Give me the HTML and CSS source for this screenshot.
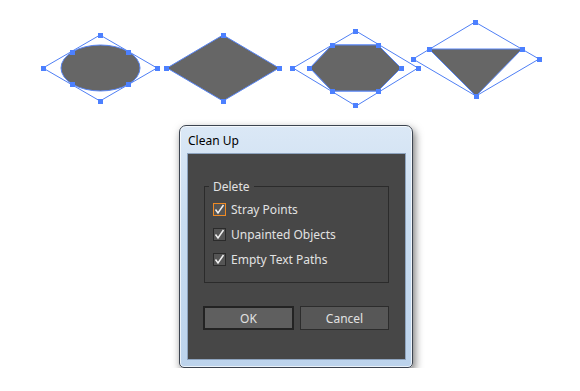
FILE: index.html
```html
<!DOCTYPE html>
<html lang="en">
<head>
    <meta charset="UTF-8">
    <title>Clean Up</title>
    <link rel="stylesheet" href="styles.css">
</head>
<body>

    <svg class="shapes" width="580" height="125" viewBox="0 0 580 125">
        <!-- ellipse -->
        <polygon class="frame" points="100,35 157,68 100,101 43,68"/>
        <ellipse class="fill" cx="100.5" cy="68" rx="39.5" ry="23"/>
        <!-- diamond -->
        <polygon class="fill" points="167,68 223,35 279,68 223,101"/>
        <!-- hexagon -->
        <polygon class="frame" points="356,31 418,68 356,106 293,68"/>
        <polygon class="frame" points="310,68 332,45 378,45 401,68 378,91 332,91"/>
        <polygon class="fill" points="310,68 332,45 378,45 401,68 378,91 332,91"/>
        <!-- triangle -->
        <polygon class="frame" points="475,22 539,59 476,96 413,59"/>
        <polygon class="fill" points="429,49 522,49 476,96"/>

        <g class="handles">
            <rect x="98" y="33" width="5" height="5"/>
            <rect x="41" y="66" width="5" height="5"/>
            <rect x="155" y="66" width="5" height="5"/>
            <rect x="98" y="99" width="5" height="5"/>
            <rect x="70" y="50" width="5" height="5"/>
            <rect x="126" y="50" width="5" height="5"/>
            <rect x="70" y="82" width="5" height="5"/>
            <rect x="126" y="82" width="5" height="5"/>

            <rect x="221" y="33" width="5" height="5"/>
            <rect x="164" y="66" width="5" height="5"/>
            <rect x="277" y="66" width="5" height="5"/>
            <rect x="221" y="99" width="5" height="5"/>

            <rect x="353" y="29" width="5" height="5"/>
            <rect x="290" y="66" width="5" height="5"/>
            <rect x="416" y="66" width="5" height="5"/>
            <rect x="353" y="103" width="5" height="5"/>
            <rect x="330" y="43" width="5" height="5"/>
            <rect x="376" y="43" width="5" height="5"/>
            <rect x="307" y="66" width="5" height="5"/>
            <rect x="399" y="66" width="5" height="5"/>
            <rect x="330" y="89" width="5" height="5"/>
            <rect x="376" y="89" width="5" height="5"/>

            <rect x="473" y="20" width="5" height="5"/>
            <rect x="411" y="57" width="5" height="5"/>
            <rect x="537" y="57" width="5" height="5"/>
            <rect x="474" y="94" width="5" height="5"/>
            <rect x="427" y="47" width="5" height="5"/>
            <rect x="520" y="47" width="5" height="5"/>
        </g>
    </svg>

    <div class="window">
        <div class="titlebar">Clean Up</div>
        <div class="panel">
            <fieldset class="group">
                <legend>Delete</legend>
                <label class="check focused">
                    <span class="box"><svg width="11" height="11" viewBox="0 0 11 11"><polyline points="1.5,5.5 4,9 9.5,1"/></svg></span>
                    Stray Points
                </label>
                <label class="check">
                    <span class="box"><svg width="11" height="11" viewBox="0 0 11 11"><polyline points="1.5,5.5 4,9 9.5,1"/></svg></span>
                    Unpainted Objects
                </label>
                <label class="check">
                    <span class="box"><svg width="11" height="11" viewBox="0 0 11 11"><polyline points="1.5,5.5 4,9 9.5,1"/></svg></span>
                    Empty Text Paths
                </label>
            </fieldset>
            <div class="buttons">
                <button class="btn btn-default">OK</button>
                <button class="btn">Cancel</button>
            </div>
        </div>
    </div>

</body>
</html>
```

FILE: styles.css
```css
body {
    margin: 0;
    background: #fff;
    font-family: 'Noto Sans', 'DejaVu Sans', sans-serif;
    font-size: 12px;
}

.shapes {
    display: block;
}

.shapes .frame {
    fill: none;
    stroke: #4f7ff5;
    stroke-width: 1;
}

.shapes .fill {
    fill: #666;
    stroke: #5683f2;
    stroke-width: 1;
}

.handles rect {
    fill: #4c80ff;
}

.window {
    margin-left: 179px;
    width: 234px;
    height: 243px;
    box-sizing: border-box;
    padding: 0 6px 7px 7px;
    border: 1px solid #3c4450;
    border-radius: 7px 7px 5px 5px;
    background: linear-gradient(180deg, #dbe8f6 0%, #c8dcf0 40%, #bcd3ec 100%);
    box-shadow: 2px 4px 8px rgba(0, 0, 0, 0.55), inset 0 0 0 1px rgba(255, 255, 255, 0.7);
    display: flex;
    flex-direction: column;
}

.titlebar {
    height: 27px;
    line-height: 29px;
    padding-left: 1px;
    color: #000;
    font-size: 12px;
}

.panel {
    flex: 1;
    background: #474747;
    border: 1px solid #8ea4bf;
    padding: 24px 16px 0 16px;
    color: #e2e2e2;
}

.group {
    margin: 0;
    padding: 6px 0 10px 8px;
    height: 105px;
    box-sizing: border-box;
    border: 1px solid #2b2b2b;
    display: flex;
    flex-direction: column;
    gap: 9px;
}

.group legend {
    padding: 0 4px;
    margin-left: -4px;
    font-size: 12px;
    color: #e2e2e2;
}

.check {
    display: flex;
    align-items: center;
    gap: 5px;
    height: 16px;
}

.box {
    width: 11px;
    height: 11px;
    border: 1px solid #2a2a2a;
    background: #555;
    display: flex;
}

.box polyline {
    fill: none;
    stroke: #f0f0f0;
    stroke-width: 1.5;
}

.check.focused .box {
    border-color: #ef8a24;
}

.buttons {
    display: flex;
    gap: 6px;
    margin: 23px 0 0 -1px;
}

.btn {
    font-family: inherit;
    font-size: 12px;
    color: #e2e2e2;
    height: 24px;
    width: 90px;
    background: #575757;
    border: 1px solid #2c2c2c;
    padding: 0;
}

.btn-default {
    width: 92px;
    background: #5f5f5f;
    border: 2px solid #232323;
}
```
